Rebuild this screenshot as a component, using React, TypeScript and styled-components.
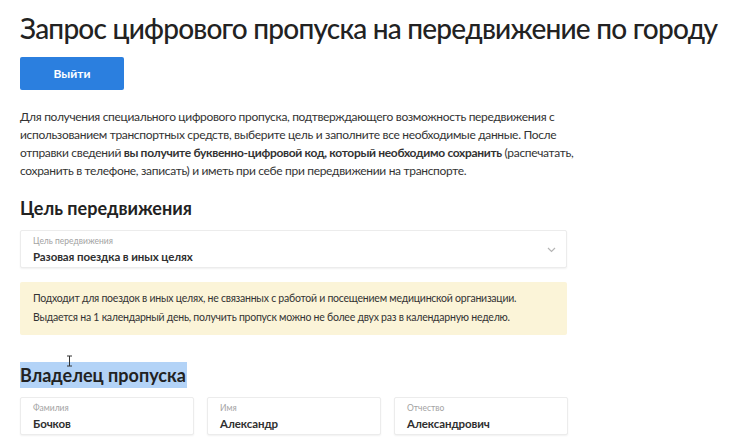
import React from "react";
import styled, { createGlobalStyle } from "styled-components";

const GlobalStyle = createGlobalStyle`
  html, body {
    margin: 0;
    padding: 0;
    background: #fff;
  }
  body {
    font-family: Lato, "Open Sans", sans-serif;
    color: #2b2b2b;
  }
`;

const Page = styled.div`
  padding: 10px 20px 0 20px;
  width: 750px;
  height: 440px;
  box-sizing: border-box;
  overflow: hidden;
  position: relative;
`;

const Title = styled.h1`
  margin: 0;
  font-size: 28px;
  line-height: 36px;
  letter-spacing: -0.78px;
  font-weight: 500;
  color: #222;
  white-space: nowrap;
`;

const ExitButton = styled.button`
  display: block;
  margin-top: 11px;
  width: 104px;
  height: 33px;
  border: none;
  border-radius: 2px;
  background: #2b7fdf;
  color: #fff;
  font-family: inherit;
  font-size: 12px;
  font-weight: 700;
  cursor: pointer;
`;

const Intro = styled.p`
  margin: 18px 0 0 0;
  font-size: 12px;
  line-height: 18px;
  letter-spacing: -0.32px;
  color: #333;
  white-space: nowrap;

  b {
    font-weight: 700;
  }
`;

const SectionTitle = styled.h2<{ $top: number }>`
  margin: ${(p) => p.$top}px 0 0 0;
  font-size: 18px;
  line-height: 26px;
  font-weight: 700;
  color: #222;
`;

const Selected = styled.span`
  display: inline-block;
  background: #b3d3f7;
  padding-right: 1px;
`;

const Field = styled.div<{ $top?: number }>`
  position: relative;
  box-sizing: border-box;
  margin-top: ${(p) => p.$top ?? 0}px;
  height: 38px;
  padding: 5px 12px 0 12px;
  border: 1px solid #ececec;
  border-radius: 2px;
  background: #fff;
  box-shadow: 0 1px 2px rgba(0, 0, 0, 0.06);
`;

const FieldLabel = styled.div`
  font-size: 8.5px;
  line-height: 10px;
  color: #a3a3a3;
`;

const FieldValue = styled.div`
  margin-top: 3px;
  font-size: 11.5px;
  line-height: 16px;
  font-weight: 700;
  letter-spacing: -0.1px;
  color: #2f2f2f;
`;

const SelectField = styled(Field)`
  width: 547px;
`;

const Chevron = styled.svg`
  position: absolute;
  right: 10px;
  top: 16px;
`;

const Notice = styled.div`
  box-sizing: border-box;
  width: 547px;
  margin-top: 14px;
  height: 53px;
  padding: 7px 13px 0 13px;
  background: #fbf4d8;
  border-radius: 2px;
  font-size: 10.5px;
  line-height: 19px;
  letter-spacing: -0.24px;
  color: #333;
  white-space: nowrap;
`;

const Row = styled.div`
  display: grid;
  grid-template-columns: repeat(3, 174px);
  gap: 13px;
  margin-top: 9px;
`;

const TextCursor = styled.svg`
  position: absolute;
  left: 66px;
  top: 355px;
`;

const App: React.FC = () => {
  return (
    <>
      <GlobalStyle />
      <Page>
        <Title>Запрос цифрового пропуска на передвижение по городу</Title>
        <ExitButton>Выйти</ExitButton>
        <Intro>
          Для получения специального цифрового пропуска, подтверждающего
          возможность передвижения с
          <br />
          использованием транспортных средств, выберите цель и заполните все
          необходимые данные. После
          <br />
          отправки сведений{" "}
          <b>вы получите буквенно-цифровой код, который необходимо сохранить</b>{" "}
          (распечатать,
          <br />
          сохранить в телефоне, записать) и иметь при себе при передвижении на
          транспорте.
        </Intro>

        <SectionTitle $top={15}>Цель передвижения</SectionTitle>
        <SelectField $top={9}>
          <FieldLabel>Цель передвижения</FieldLabel>
          <FieldValue>Разовая поездка в иных целях</FieldValue>
          <Chevron width="9" height="6" viewBox="0 0 9 6">
            <path d="M1 1l3.5 3.5L8 1" fill="none" stroke="#b5b5b5" strokeWidth="1.2" />
          </Chevron>
        </SelectField>

        <Notice>
          Подходит для поездок в иных целях, не связанных с работой и посещением
          медицинской организации.
          <br />
          Выдается на 1 календарный день, получить пропуск можно не более двух
          раз в календарную неделю.
        </Notice>

        <SectionTitle $top={27}>
          <Selected>Владелец пропуска</Selected>
        </SectionTitle>
        <Row>
          <Field>
            <FieldLabel>Фамилия</FieldLabel>
            <FieldValue>Бочков</FieldValue>
          </Field>
          <Field>
            <FieldLabel>Имя</FieldLabel>
            <FieldValue>Александр</FieldValue>
          </Field>
          <Field>
            <FieldLabel>Отчество</FieldLabel>
            <FieldValue>Александрович</FieldValue>
          </Field>
        </Row>

        <TextCursor width="7" height="12" viewBox="0 0 7 12">
          <path d="M1 1h5M3.5 1v10M1 11h5" fill="none" stroke="#333" strokeWidth="1" />
        </TextCursor>
      </Page>
    </>
  );
};

export default App;
